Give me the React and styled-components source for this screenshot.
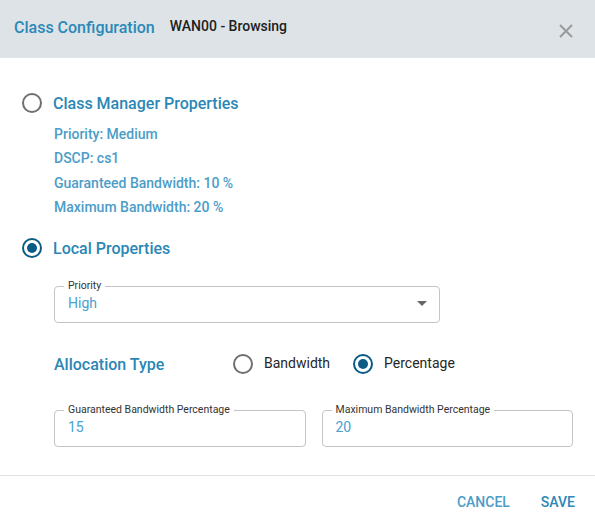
import React from "react";
import styled, { createGlobalStyle } from "styled-components";

const Global = createGlobalStyle`
  html, body { margin: 0; padding: 0; background: #fff; }
  body { font-family: Roboto, "Liberation Sans", Arial, sans-serif; }
  * { box-sizing: border-box; }
`;

const Dialog = styled.div`
  width: 595px;
  height: 522px;
  display: flex;
  flex-direction: column;
  background: #fff;
`;

const Header = styled.div`
  height: 58px;
  flex: none;
  background: #dee3e7;
  display: flex;
  align-items: center;
  padding: 0 21px 0 14px;
`;

const Title = styled.div`
  font-size: 16px;
  font-weight: 500;
  color: #2a89b8;
  margin-top: -4px;
`;

const SubTitle = styled.div`
  font-size: 14px;
  font-weight: 500;
  color: #212121;
  margin-left: 15px;
  margin-top: -6px;
`;

const Close = styled.button`
  margin-left: auto;
  border: none;
  background: none;
  padding: 0;
  width: 16px;
  height: 16px;
  display: flex;
  align-items: center;
  justify-content: center;
  margin-top: 4px;
  cursor: pointer;
`;

const Body = styled.div`
  flex: 1;
  display: flex;
  flex-direction: column;
  padding: 35px 22px 0;
`;

const RadioRow = styled.div`
  display: flex;
  align-items: center;
  gap: ${(p) => p.$gap || 11}px;
`;

const RadioCircle = styled.span`
  width: 20px;
  height: 20px;
  border-radius: 50%;
  border: 2px solid ${(p) => (p.$checked ? "#0b5b86" : "#6f6f6f")};
  display: flex;
  align-items: center;
  justify-content: center;
  flex: none;
  &::after {
    content: "";
    display: ${(p) => (p.$checked ? "block" : "none")};
    width: 10px;
    height: 10px;
    border-radius: 50%;
    background: #0b5b86;
  }
`;

const SectionLabel = styled.div`
  font-size: 16px;
  font-weight: 500;
  color: #2a87b6;
`;

const PropList = styled.div`
  display: flex;
  flex-direction: column;
  padding-left: 32px;
  margin-top: 13px;
  gap: 7.4px;
`;

const PropItem = styled.div`
  font-size: 14px;
  font-weight: 500;
  color: #4b9dc8;
  line-height: 17px;
`;

const LocalSection = styled.div`
  margin-top: 22px;
`;

const Indented = styled.div`
  padding-left: 32px;
  display: flex;
  flex-direction: column;
`;

const Field = styled.div`
  border: 1px solid #c4c4c4;
  border-radius: 4px;
  height: 37px;
  width: ${(p) => p.$width}px;
  padding: 0 13px 3px;
  position: relative;
  display: flex;
  align-items: center;
  margin-top: ${(p) => p.$top || 0}px;
`;

const FieldLabel = styled.span`
  position: absolute;
  left: 9px;
  top: -7px;
  font-size: 10.5px;
  line-height: 12px;
  color: #333;
  padding: 0 4px;
  background: #fff;
  white-space: nowrap;
`;

const FieldValue = styled.div`
  font-size: 14px;
  color: #4a9fd0;
  flex: 1;
`;

const Arrow = styled.span`
  width: 0;
  height: 0;
  border-left: 5px solid transparent;
  border-right: 5px solid transparent;
  border-top: 5px solid #666;
  margin-right: -1px;
`;

const AllocRow = styled.div`
  display: flex;
  align-items: center;
  margin-top: 31px;
`;

const AllocLabel = styled(SectionLabel)`
  width: 179px;
`;

const OptionText = styled.span`
  font-size: 14px;
  color: #262626;
  margin-top: -2px;
`;

const Options = styled.div`
  display: flex;
  gap: 23px;
`;

const FieldsRow = styled.div`
  display: flex;
  gap: 16px;
  margin-top: 36px;
`;

const Footer = styled.div`
  flex: none;
  height: 47px;
  border-top: 1px solid #e0e0e0;
  display: flex;
  align-items: center;
  justify-content: flex-end;
  padding: 0 20px 0 0;
  gap: 31px;
`;

const Button = styled.button`
  border: none;
  background: none;
  padding: 0;
  font-family: Roboto, "Liberation Sans", Arial, sans-serif;
  font-size: 14px;
  font-weight: 500;
  text-transform: uppercase;
  color: ${(p) => (p.$primary ? "#2a87b7" : "#4b9cc7")};
  margin-top: 5px;
  cursor: pointer;
`;

export default function App() {
  return (
    <>
      <Global />
      <Dialog>
        <Header>
          <Title>Class Configuration</Title>
          <SubTitle>WAN00 - Browsing</SubTitle>
          <Close aria-label="close">
            <svg width="14" height="14" viewBox="0 0 14 14">
              <path d="M1 1L13 13M13 1L1 13" stroke="#9a9a9a" strokeWidth="2" />
            </svg>
          </Close>
        </Header>
        <Body>
          <RadioRow>
            <RadioCircle />
            <SectionLabel>Class Manager Properties</SectionLabel>
          </RadioRow>
          <PropList>
            <PropItem>Priority: Medium</PropItem>
            <PropItem>DSCP: cs1</PropItem>
            <PropItem>Guaranteed Bandwidth: 10 %</PropItem>
            <PropItem>Maximum Bandwidth: 20 %</PropItem>
          </PropList>
          <LocalSection>
            <RadioRow>
              <RadioCircle $checked />
              <SectionLabel>Local Properties</SectionLabel>
            </RadioRow>
          </LocalSection>
          <Indented>
            <Field $width={386} $top={28}>
              <FieldLabel>Priority</FieldLabel>
              <FieldValue>High</FieldValue>
              <Arrow />
            </Field>
            <AllocRow>
              <AllocLabel>Allocation Type</AllocLabel>
              <Options>
                <RadioRow>
                  <RadioCircle />
                  <OptionText>Bandwidth</OptionText>
                </RadioRow>
                <RadioRow>
                  <RadioCircle $checked />
                  <OptionText>Percentage</OptionText>
                </RadioRow>
              </Options>
            </AllocRow>
            <FieldsRow>
              <Field $width={252}>
                <FieldLabel>Guaranteed Bandwidth Percentage</FieldLabel>
                <FieldValue>15</FieldValue>
              </Field>
              <Field $width={252}>
                <FieldLabel>Maximum Bandwidth Percentage</FieldLabel>
                <FieldValue>20</FieldValue>
              </Field>
            </FieldsRow>
          </Indented>
        </Body>
        <Footer>
          <Button>Cancel</Button>
          <Button $primary>Save</Button>
        </Footer>
      </Dialog>
    </>
  );
}
